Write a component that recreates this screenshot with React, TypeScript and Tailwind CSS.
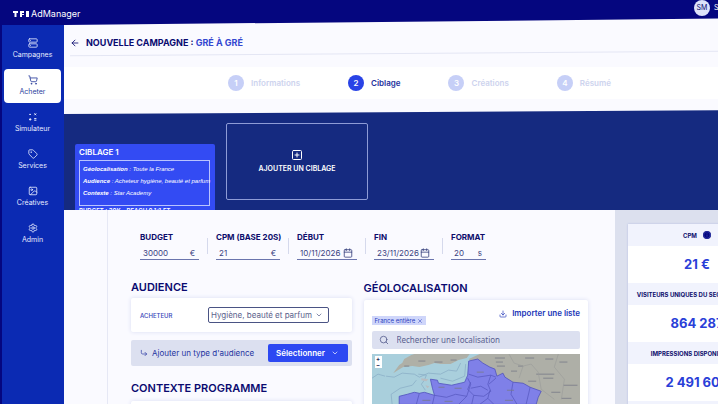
import { useState } from 'react';
import type { ReactNode } from 'react';
import clsx from 'clsx';
import {
  ArrowLeft,
  Calendar,
  ChevronDown,
  CornerDownRight,
  Download,
  Image,
  Info,
  Search,
  Server,
  Settings,
  ShoppingCart,
  SquarePlus,
  Tag,
  X,
} from 'lucide-react';

const navItems = [
  { label: 'Campagnes', icon: Server },
  { label: 'Acheter', icon: ShoppingCart },
  { label: 'Simulateur', icon: SimulatorIcon },
  { label: 'Services', icon: Tag },
  { label: 'Créatives', icon: Image },
  { label: 'Admin', icon: Settings },
];

const steps = ['Informations', 'Ciblage', 'Créations', 'Résumé'];

const stats = [
  { label: 'CPM', value: '21 €', info: true },
  { label: 'VISITEURS UNIQUES DU SEGMENT CIBLE', value: '864 287' },
  { label: 'IMPRESSIONS DISPONIBLES TV', value: '2 491 604' },
];

function SimulatorIcon({ className }: { className?: string }) {
  return (
    <svg viewBox="0 0 10 10" className={className} fill="none" stroke="currentColor">
      <path d="M1.2 2.4h1.8M6.4 1.4l1.8 1.8M8.2 1.4L6.4 3.2M1 7.4h2.4M2.2 6.2v2.4M6.2 6.6h2.2M6.2 8.2h2.2" />
    </svg>
  );
}

function Header() {
  return (
    <header className="flex h-[25px] shrink-0 items-start justify-between bg-[#05067f] text-white [clip-path:polygon(0_0,100%_0,100%_18px,64px_25px,0_25px)]">
      <a href="#" className="flex items-center gap-px pt-2 pl-[13px] text-[9px] leading-3">
        <svg viewBox="0 0 17 7" className="h-[7px] w-[17px]" fill="currentColor" role="img" aria-label="TF1">
          <rect width="5" height="2" />
          <rect x="1.5" width="2" height="6" />
          <rect x="7" width="2" height="6" />
          <rect x="7" width="4" height="2" />
          <rect x="7" y="3" width="4" height="1" />
          <rect x="13" width="3" height="6" />
        </svg>
        AdManager
      </a>
      <div className="flex w-[85px] items-center gap-1 text-[7px]">
        <span className="flex size-4 items-center justify-center rounded-full bg-[#dde2fa] text-[#0a0a70]">SM</span>
        <span>S</span>
      </div>
    </header>
  );
}

function Sidebar() {
  return (
    <nav className="flex w-16 shrink-0 flex-col gap-[3px] border-l-2 border-[#05067f] bg-[#0b2ab3] pt-[7px] pr-[3px] pl-0.5">
      {navItems.map(({ label, icon: Icon }) => (
        <a
          key={label}
          href="#"
          className={clsx(
            'flex h-[34px] flex-col items-center justify-center gap-0.5 rounded text-[7px] leading-[10px]',
            label === 'Acheter' ? 'bg-white text-[#2b3f9e]' : 'text-[#e6eaff]'
          )}
        >
          <Icon className="size-[10px]" />
          {label}
        </a>
      ))}
    </nav>
  );
}

function Stepper() {
  return (
    <ol className="flex items-center justify-center gap-12 pr-1 text-[8px] font-semibold">
      {steps.map((step, i) => (
        <li
          key={step}
          className={clsx('flex items-center gap-[7px]', i === 1 ? 'text-[#1c2f9c]' : 'text-[#cdd3ee]')}
        >
          <span
            className={clsx(
              'flex size-4 items-center justify-center rounded-full text-white',
              i === 1 ? 'bg-[#2943e6]' : 'bg-[#c6cff7]'
            )}
          >
            {i + 1}
          </span>
          {step}
        </li>
      ))}
    </ol>
  );
}

function TargetBand() {
  return (
    <section className="flex h-[100px] shrink-0 items-start gap-[11px] overflow-hidden bg-[#152a80] pl-[11px] text-white [clip-path:polygon(0_4px,100%_0,100%_100%,0_100%)]">
      <div className="mt-[34px] w-[140px] rounded-t-xs bg-[#334bf3] px-1 pt-[3px]">
        <h2 className="text-[8px] leading-[10px] font-semibold">CIBLAGE 1</h2>
        <div className="mt-[3px] flex h-[46px] w-[131px] flex-col justify-around border border-[#b9c3ff] px-[3px] pb-1.5 pt-0.5 font-['Liberation_Sans',sans-serif] text-[6px] leading-[10px] whitespace-nowrap italic">
          <p>
            <b>Géolocalisation</b> : Toute la France
          </p>
          <p>
            <b>Audience</b> : Acheteur hygiène, beauté et parfum
          </p>
          <p>
            <b>Contexte</b> : Star Academy
          </p>
        </div>
        <p className="mt-px text-[6px] leading-2 font-semibold">BUDGET : 30K - REACH 0.1/1.FT</p>
      </div>
      <button className="mt-[13px] flex h-[77px] w-[142px] flex-col items-center justify-center gap-[3px] rounded-xs border border-[#8e9bd6] text-[7px] leading-[10px] font-semibold">
        <SquarePlus className="size-3" />
        AJOUTER UN CIBLAGE
      </button>
    </section>
  );
}

type FieldProps = {
  id: string;
  label: string;
  value: string;
  className: string;
  children: ReactNode;
};

function Field({ id, label, value, className, children }: FieldProps) {
  return (
    <div className={className}>
      <label htmlFor={id} className="block text-[8px] leading-[10px] font-bold whitespace-nowrap text-[#0c0d6b]">
        {label}
      </label>
      <div className="mt-1 flex h-[14px] items-center justify-between border-b border-[#6a74ad] pr-1 pl-[3px] text-[8px] leading-3 text-[#3a437f]">
        <input id={id} defaultValue={value} className="h-3 w-full min-w-0 outline-none" />
        {children}
      </div>
    </div>
  );
}

function Divider() {
  return <span className="h-4 w-px bg-[#d5d9ec]" />;
}

function CampaignFields() {
  return (
    <div className="flex items-center gap-2 pl-8">
      <Field id="budget" label="BUDGET" value="30000" className="w-[59px]">
        €
      </Field>
      <Divider />
      <Field id="cpm" label="CPM (BASE 20S)" value="21" className="w-[64px]">
        €
      </Field>
      <Divider />
      <Field id="start" label="DÉBUT" value="10/11/2026" className="w-[60px]">
        <Calendar className="size-[10px] shrink-0" />
      </Field>
      <Divider />
      <Field id="end" label="FIN" value="23/11/2026" className="w-[60px]">
        <Calendar className="size-[10px] shrink-0" />
      </Field>
      <Divider />
      <Field id="format" label="FORMAT" value="20" className="w-[35px]">
        s
      </Field>
    </div>
  );
}

function AudienceColumn() {
  return (
    <div className="min-w-0 flex-55">
      <h2 className="text-[11px] leading-[14px] font-semibold text-[#0a0a70]">AUDIENCE</h2>
      <div className="mt-1 flex h-[34px] items-center gap-[34px] rounded-xs bg-white px-[9px] shadow-[0_0_4px_#d9ddf2]">
        <label htmlFor="buyer" className="w-[34px] text-[6px] font-medium text-[#3344b8]">
          ACHETEUR
        </label>
        <div className="grid w-[121px] items-center">
          <select
            id="buyer"
            className="col-start-1 row-start-1 h-4 appearance-none rounded-xs border border-[#4a5384] bg-white pl-0.5 text-[8px] text-[#5b628c]"
          >
            <option>Hygiène, beauté et parfum</option>
          </select>
          <ChevronDown className="pointer-events-none col-start-1 row-start-1 mr-1.5 size-2 justify-self-end text-[#4a5384]" />
        </div>
      </div>
      <div className="mt-2 flex h-[26px] items-center rounded-xs bg-[#dce0f0] pr-1 pl-[9px] text-[#2433a0]">
        <CornerDownRight className="size-2" />
        <span className="ml-1 text-[8px]">Ajouter un type d'audience</span>
        <button className="ml-auto flex h-[18px] w-20 items-center justify-center gap-1.5 rounded-xs bg-[#2c48f2] text-[8px] font-semibold text-white">
          Sélectionner
          <ChevronDown className="size-2" />
        </button>
      </div>
      <h2 className="mt-[15px] text-[11px] leading-[14px] font-semibold text-[#0a0a70]">CONTEXTE PROGRAMME</h2>
      <div className="mt-1.5 h-[34px] rounded-xs bg-white shadow-[0_0_4px_#d9ddf2]" />
    </div>
  );
}

function FranceMap() {
  return (
    <svg viewBox="0 0 207 50" preserveAspectRatio="xMidYMin slice" className="h-[50px] w-full" fill="none">
      <rect width="207" height="50" fill="#a9cfdc" />
      <path d="M21 19l6-8 3-2 2-4 7-4 3-1h55l-3 4-8 2-8 4-10 0-6-1-6 2-9 2-7-1-9 1-5 3z" fill="#afb0a7" />
      <path d="M96 5l11-5h100v50h-60l-30-25z" fill="#aeafa7" />
      <path
        d="M0 24l6-4 7 2M14 22l8 1 8-4 12 1 5 3 9-4 12 1 8-4 8 1 4-8M20 50l-1-10 9-6 12-3 4-5M46 20l8 1-2 5-3 4 4 6M68 24l12 3 12-5 1-12"
        stroke="#88abc4"
        strokeWidth="0.7"
      />
      <path d="M49 24l7 1-2 2-5-1zM53 31l4 1-2 2z" fill="#b9bcc0" />
      <path
        d="M27 50v-8l8-2 7-2 5 1 5-1 10 3-2-7-2-9 7 1 1 3 13 2 13-3 3-7 1-14 9-2 5 4 7 4 5 2 2 7 6-3 2 4 8 5 10 1 7 4 11 4-3 6-2 7z"
        fill="#7f80e8"
        stroke="#5153bd"
        strokeWidth="0.8"
      />
      <path
        d="M62 41l12 2 9-3 11 2 4-12-3-6M96 20l9 3 13-2 5 2M118 21l-3 9 3 7-7 5-10-1-6-6 3-7M117 36l-2 8 6 6M123 24l-7 6M98 34l10-2 7 4M101 41l-2 9M94 42l-8 8M47 39l-3 11M62 41l-2 9M115 44l-8 6M140 28l-2 12 6 10M157 33l-4 17"
        stroke="#5456bd"
        strokeWidth="0.7"
      />
      <path
        d="M46 7h7M62 8h8M32 12h5M78 6h6M122 4h10M123 8h7M124 12h8M152 4h9M172 5h8M145 12h5M138 17h6M163 20h18M170 24h10M186 8h8M190 31h14M155 27h8M178 38h9M188 44h10M104 18h7M82 34h7M134 36h7M66 33h6M50 46h8M72 47h8M132 46h8"
        stroke="#777a87"
        strokeWidth="0.8"
      />
      <path
        d="M136 0l5 9 9 3 8-2 7 8M185 0l-4 13 10 12-3 20M150 12l-4 12M165 18l3 17 13 10"
        stroke="#999b99"
        strokeWidth="0.6"
      />
    </svg>
  );
}

function LocationColumn() {
  const [query, setQuery] = useState('');

  return (
    <div className="min-w-0 flex-56">
      <h2 className="mt-px text-[11px] leading-[14px] font-semibold text-[#0a0a70]">GÉOLOCALISATION</h2>
      <div className="mt-[5px] rounded-xs bg-white px-2 pt-2 pb-3 shadow-[0_0_4px_#d9ddf2]">
        <div className="flex items-start justify-between">
          <span className="mt-2 flex h-[9px] items-center gap-0.5 bg-[#cfd6fa] px-[3px] text-[6px] text-[#2b3fc0]">
            France entière
            <button aria-label="Retirer France entière">
              <X className="block size-[6px]" />
            </button>
          </span>
          <a href="#" className="flex items-center gap-[5px] text-[8px] leading-[11px] font-semibold text-[#2236b8]">
            <Download className="size-2" />
            Importer une liste
          </a>
        </div>
        <div className="mt-1.5 flex h-[18px] items-center gap-2 rounded-xs bg-[#dce0f0] px-[7px] text-[#59608f]">
          <Search className="size-[10px]" />
          <input
            aria-label="Rechercher une localisation"
            value={query}
            onChange={(e) => setQuery(e.target.value)}
            placeholder="Rechercher une localisation"
            className="min-w-0 flex-1 font-['Noto_Sans',sans-serif] text-[8px] outline-none placeholder:text-[#59608f]"
          />
        </div>
        <div className="relative mt-[5px]">
          <FranceMap />
          <div className="absolute top-0.5 left-[3px] flex w-[7px] flex-col bg-white text-center text-[6px] leading-[6px] font-bold text-[#222850]">
            <button className="h-[6px]">+</button>
            <button className="h-[6px]">−</button>
          </div>
        </div>
      </div>
    </div>
  );
}

function StatsPanel() {
  return (
    <aside className="w-[164px] shrink-0 bg-[#dce0ee] px-[13px] pt-[14px]">
      <dl className="bg-white text-center shadow-[0_0_2px_#b4bce4]">
        {stats.map(({ label, value, info }) => (
          <div key={label}>
            <dt className="flex h-[22px] items-center justify-center gap-1.5 bg-[#f1f3fd] text-[6px] font-bold whitespace-nowrap text-[#0c0d6b]">
              {label}
              {info && <Info className="size-2 rounded-full bg-[#05067f] text-[#3c4ab5]" />}
            </dt>
            <dd className="flex h-[37px] items-center justify-center text-[13px] font-bold text-[#2a40d8]">{value}</dd>
          </div>
        ))}
        <div className="h-10 bg-[#f1f3fd]" />
      </dl>
    </aside>
  );
}

export default function App() {
  return (
    <div className="h-screen overflow-hidden bg-[#fafaff] font-['Inter',sans-serif]">
      <div className="flex h-full min-w-[779px] flex-col">
        <Header />
        <div className="flex min-h-0 flex-1">
          <Sidebar />
          <main className="flex min-w-0 flex-1 flex-col">
            <div className="flex h-[35px] shrink-0 items-center gap-1.5 pl-[6px] text-[#0a0a70]">
              <button aria-label="Retour">
                <ArrowLeft className="size-2.5" />
              </button>
              <h1 className="text-[9px] font-bold">
                NOUVELLE CAMPAGNE : <span className="text-[#3346d0]">GRÉ À GRÉ</span>
              </h1>
            </div>
            <div className="-mt-[7px] mr-[61px] ml-[6px] h-px shrink-0 rotate-[-0.4deg] bg-[#e4e6f4]" />
            <div className="mt-[13px] mb-[11px] bg-white py-2">
              <Stepper />
            </div>
            <TargetBand />
            <div className="flex min-h-0 flex-1">
              <div className="min-w-0 flex-1 pl-[43px]">
                <div className="h-full border-l border-[#e6e8f5] pt-[22px]">
                  <CampaignFields />
                  <div className="mt-5 flex items-start gap-3 pr-[27px] pl-[23px]">
                    <AudienceColumn />
                    <LocationColumn />
                  </div>
                </div>
              </div>
              <StatsPanel />
            </div>
          </main>
        </div>
      </div>
    </div>
  );
}
